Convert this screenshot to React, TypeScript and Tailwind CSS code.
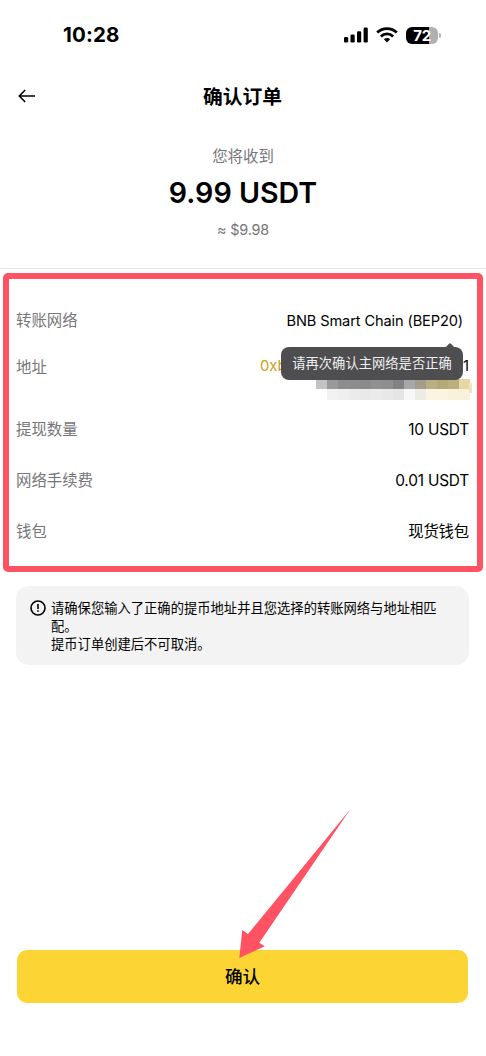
import React from "react";

const details = [
  { label: "提现数量", value: "10 USDT" },
  { label: "网络手续费", value: "0.01 USDT" },
  { label: "钱包", value: "现货钱包" },
];

const maskTop = [
  "bg-[#c3c3c3]", "bg-[#9a9a9b]", "bg-[#8d8d8f]", "bg-[#8d8d8e]", "bg-[#8a8a8c]", "bg-[#909091]", "bg-[#8e8e8f]",
  "bg-[#828284]", "bg-[#a7a7ab]", "bg-[#a39d8a]", "bg-[#baae85]", "bg-[#b5a877]", "bg-[#bbaf80]", "bg-[#e6d7a5]",
];

const maskBottom = [
  "bg-white", "bg-[#f2f2f2]", "bg-[#efefef]", "bg-[#ebebeb]", "bg-[#e9e9e9]", "bg-[#ebebeb]", "bg-[#e8e8e9]",
  "bg-[#e5e5e6]", "bg-[#f7f7f7]", "bg-[#ecebe5]", "bg-[#faf5e0]", "bg-[#faf5e0]", "bg-[#f8f2dd]", "bg-[#f8f1dc]",
];

function StatusBar() {
  return (
    <div className="flex h-[70px] items-center justify-between pl-[63px] pr-[45px]">
      <span className="text-[20.5px] font-bold leading-none tracking-[0.15px]">10:28</span>
      <div className="flex items-center">
        <svg width="25" height="16" viewBox="0 0 25 16" fill="#000">
          <rect x="1" y="10" width="4.2" height="5.5" rx="1.3" />
          <rect x="7.5" y="7.6" width="4.2" height="7.9" rx="1.3" />
          <rect x="14" y="4.2" width="4.2" height="11.3" rx="1.3" />
          <rect x="20.6" y="0.6" width="4.2" height="14.9" rx="1.3" />
        </svg>
        <svg className="ml-2" width="22" height="16" viewBox="0 0 22 16" fill="none" stroke="#000" strokeWidth="2.8">
          <path d="M1.2 5.6a14 14 0 0 1 19.6 0" />
          <path d="M4.9 9.4a8.8 8.8 0 0 1 12.2 0" />
          <path d="M11 15.4l-3.1-3.1a4.4 4.4 0 0 1 6.2 0z" fill="#000" stroke="none" />
        </svg>
        <div className="ml-2 flex h-[17px] w-8 items-center justify-center rounded-[6px] bg-[linear-gradient(90deg,#000_72%,#b0b0b0_72%)] text-[15px] font-bold leading-none tracking-[-0.3px] text-white">
          72
        </div>
        <div className="ml-px h-[5px] w-[2px] rounded-r-full bg-[#b0b0b0]" />
      </div>
    </div>
  );
}

function Tooltip() {
  return (
    <div className="absolute left-[272px] top-[68px]">
      <div className="relative flex h-[33px] w-[182px] items-center justify-center rounded-[8px] bg-[#4e4e50] text-[13.3px] text-[#f0f0f0]">
        <svg className="absolute -top-1 right-2" width="10" height="5" viewBox="0 0 10 5">
          <path d="M0 5L4 .7Q5 0 6 .7L10 5z" fill="#4e4e50" />
        </svg>
        请再次确认主网络是否正确
      </div>
    </div>
  );
}

function AddressMask() {
  return (
    <div className="absolute left-[307px] top-[100px]">
      <div className="flex h-[10px]">
        {maskTop.map((color, i) => (
          <div key={i} className={`w-[11px] ${color}`} />
        ))}
      </div>
      <div className="flex h-[11px]">
        {maskBottom.map((color, i) => (
          <div key={i} className={`w-[11px] ${color}`} />
        ))}
      </div>
      <div className="absolute left-[153px] top-1 h-[10px] w-[3px] bg-[#f1e5bb]" />
    </div>
  );
}

export default function App() {
  return (
    <div className="relative flex h-[1056px] w-[486px] flex-col bg-white font-[Inter,'Noto_Sans_CJK_SC',sans-serif] text-black">
      <StatusBar />

      {/* Header */}
      <header className="flex h-[52px] items-center px-[18px]">
        <svg className="-mt-px" width="18" height="14" viewBox="0 0 18 14" fill="none" stroke="#000" strokeWidth="1.6">
          <path d="M17 7H1.5M7.2 1L1.3 7l5.9 6" />
        </svg>
        <h1 className="flex-1 pr-[19px] pt-px text-center text-[19.8px] font-bold leading-[52px]">确认订单</h1>
      </header>

      {/* Amount */}
      <section className="flex h-[147px] flex-col items-center border-b border-[#e6e6e6] pt-[23px]">
        <p className="text-[15.4px] leading-6 text-[#76767a]">您将收到</p>
        <p className="mt-[6px] text-[28.6px] font-semibold leading-9">9.99 USDT</p>
        <p className="mt-[7px] text-[14.4px] leading-6 tracking-[-0.15px] text-[#76767a]">≈ $9.98</p>
      </section>

      {/* Order details */}
      <section className="relative mx-[3px] mt-1 h-[299px] shrink-0 rounded-[5px] border-[6px] border-[#ff5263] pl-[7px] pr-2 pt-[18px] text-[15.4px]">
        <div className="flex h-[47px] items-center justify-between pt-px">
          <span className="text-[#76767a]">转账网络</span>
          <span className="mr-1.5 pt-px text-[14.6px] tracking-[-0.12px]">BNB Smart Chain (BEP20)</span>
        </div>
        <div className="flex h-[46px] items-center justify-between pt-px">
          <span className="text-[#76767a]">地址</span>
          <div className="-mt-[3px] flex w-[209px] justify-between text-[14.8px]">
            <span className="text-[#d0a01c]">0xb</span>
            <span>1</span>
          </div>
        </div>
        <div className="mt-[14px]">
          {details.map((item) => (
            <div key={item.label} className="flex h-[51px] items-center justify-between">
              <span className="text-[#76767a]">{item.label}</span>
              <span className="pt-px tracking-[-0.2px]">{item.value}</span>
            </div>
          ))}
        </div>
        <AddressMask />
        <Tooltip />
      </section>

      {/* Notice */}
      <section className="ml-4 mt-[14px] flex h-[79px] w-[453px] rounded-[13px] bg-[#f3f3f3] pl-[14px] pt-[13px]">
        <svg className="mt-px shrink-0" width="16" height="16" viewBox="0 0 16 16" fill="none" stroke="#000" strokeWidth="1.6">
          <circle cx="8" cy="8" r="7" />
          <path d="M8 4v5M8 10.2v1.6" />
        </svg>
        <p className="ml-[5px] w-[390px] text-[13.3px] leading-[18px]">
          请确保您输入了正确的提币地址并且您选择的转账网络与地址相匹配。
          <br />
          提币订单创建后不可取消。
        </p>
      </section>

      <button className="mb-[53px] ml-[17px] mt-auto h-[53px] w-[451px] shrink-0 rounded-[10px] bg-[#fcd535] pt-px text-[17.6px] font-medium">
        确认
      </button>

      {/* Arrow pointing at the confirm button */}
      <svg className="pointer-events-none absolute left-[238px] top-[808px]" width="114" height="152" viewBox="0 0 114 152">
        <path d="M112.7 .7L10 126 4.3 122 1.3 150 26.7 138.3 21.3 134.7z" fill="#ff5263" />
      </svg>
    </div>
  );
}
